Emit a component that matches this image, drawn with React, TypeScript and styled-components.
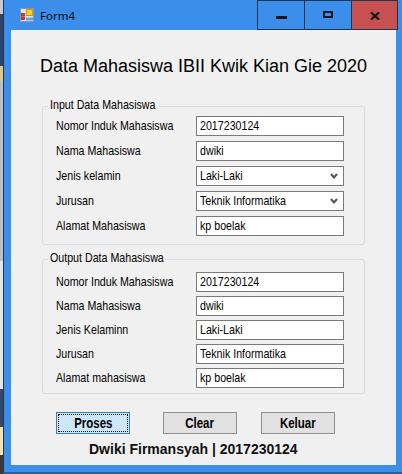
import React from "react";
import styled, { createGlobalStyle } from "styled-components";

const sans = `"Liberation Sans", Arial, sans-serif`;

const Global = createGlobalStyle`
  html, body { margin: 0; padding: 0; background: #1d3557; }
  body { width: 402px; height: 474px; overflow: hidden; }
  * { box-sizing: border-box; }
`;

const Screen = styled.div`
  display: flex;
  width: 402px;
  height: 474px;
`;

const DesktopStrip = styled.div`
  width: 3px;
  flex: none;
  background: linear-gradient(
    #c3ccd6 0 3%,
    #2c4468 3% 14%,
    #d9c98a 14% 17%,
    #b8c2cc 17% 55%,
    #e4e7ea 55% 82%,
    #34496a 82% 90%,
    #efe3b4 90% 96%,
    #3a3a3a 96%
  );
`;

const Window = styled.div`
  flex: 1;
  display: flex;
  flex-direction: column;
  background: #3b8eea;
  border-left: 1px solid #1f3552;
  border-bottom: 2px solid #2a5f9e;
  padding: 0 6px 7px 7px;
`;

const TitleBar = styled.div`
  height: 30px;
  flex: none;
  display: flex;
  align-items: center;
  margin: 0 -6px 0 -7px;
  padding: 0 4px 0 16px;
`;

const Caption = styled.span`
  margin-left: 6px;
  font-family: "Noto Sans", "Open Sans", sans-serif;
  font-size: 11.5px;
  color: #0a0a0a;
  flex: 1;
`;

const CaptionButtons = styled.div`
  display: flex;
  align-self: stretch;
`;

const CaptionButton = styled.div<{ $close?: boolean }>`
  width: 47px;
  height: 30px;
  display: flex;
  align-items: center;
  justify-content: center;
  border: 1px solid #1f3552;
  border-right-width: ${(p) => (p.$close ? 1 : 0)}px;
  background: ${(p) => (p.$close ? "#c75050" : "#3b8eea")};
`;

const MinGlyph = styled.div`
  width: 11px;
  height: 3px;
  margin-top: 5px;
  background: #0b1624;
`;

const MaxGlyph = styled.div`
  width: 10px;
  height: 7px;
  margin-top: -1px;
  border: 2px solid #0b1624;
`;

const Client = styled.div`
  flex: 1;
  display: flex;
  flex-direction: column;
  background: #f0f0f0;
`;

const Heading = styled.h1`
  margin: 26px 0 0;
  text-align: center;
  font-family: ${sans};
  font-weight: normal;
  font-size: 18px;
  line-height: 21px;
  color: #000;
`;

/* Narrow (condensed) text like the WinForms label font */
const Narrow = styled.span<{ $center?: boolean }>`
  display: inline-block;
  white-space: nowrap;
  transform: scaleX(0.82);
  transform-origin: ${(p) => (p.$center ? "center" : "left")} center;
`;

const Group = styled.fieldset<{ $mt: number; $pt: number; $pb: number; $gap: number }>`
  margin: ${(p) => p.$mt}px 31px 0 31px;
  padding: ${(p) => p.$pt}px 19px ${(p) => p.$pb}px 13px;
  border: 1px solid #d8dbde;
  border-radius: 3px;
  display: flex;
  flex-direction: column;
  gap: ${(p) => p.$gap}px;
  min-width: 0;
`;

const Legend = styled.legend<{ $w: number }>`
  width: ${(p) => p.$w}px;
  margin-left: -8px;
  padding: 0 2px 3px;
  overflow: visible;
  font-family: ${sans};
  font-size: 13px;
  line-height: 12px;
  color: #000;
`;

const Row = styled.div`
  display: grid;
  grid-template-columns: 140px 148px;
  align-items: center;
  height: 20px;
`;

const Label = styled.span`
  font-family: ${sans};
  font-size: 13px;
  line-height: 20px;
  color: #000;
  white-space: nowrap;
`;

const Field = styled.div`
  height: 20px;
  display: flex;
  align-items: center;
  justify-content: space-between;
  padding: 0 5px 0 3px;
  border: 1px solid #7a7a7a;
  background: #fff;
  font-family: ${sans};
  font-size: 13px;
  line-height: 18px;
  color: #000;
  white-space: nowrap;
`;

const ButtonRow = styled.div`
  display: flex;
  margin-top: 18px;
  padding-left: 45px;
`;

const Button = styled.div<{ $primary?: boolean; $ml?: number }>`
  position: relative;
  width: 74px;
  height: 22px;
  margin-left: ${(p) => p.$ml ?? 0}px;
  display: flex;
  align-items: center;
  justify-content: center;
  border: 1px solid ${(p) => (p.$primary ? "#3c7fb1" : "#8f8f8f")};
  background: ${(p) => (p.$primary ? "#cce6fa" : "#e1e1e1")};
  font-family: ${sans};
  font-weight: bold;
  font-size: 14px;
  line-height: 16px;
  color: #000;

  ${(p) =>
    p.$primary &&
    `&::after {
      content: "";
      position: absolute;
      inset: 1px;
      border: 1px dotted #000;
    }`}
`;

const Footer = styled.div`
  margin-top: 7px;
  padding-left: 78px;
  font-family: ${sans};
  font-weight: bold;
  font-size: 14px;
  line-height: 16px;
  color: #111;
`;

const AppIcon = () => (
  <svg width="14" height="14" viewBox="0 0 14 14">
    <rect x="0.5" y="0.5" width="13" height="13" fill="#dfe7f0" stroke="#8797ab" />
    <rect x="6.5" y="1.5" width="6" height="6" fill="#f7cf2a" stroke="#c99a12" />
    <rect x="1.5" y="5.5" width="3" height="2.5" fill="#d93a2f" stroke="#a8241c" strokeWidth="0.8" />
    <rect x="1.5" y="9" width="3" height="2.5" fill="#d93a2f" stroke="#a8241c" strokeWidth="0.8" />
    <rect x="6" y="9.5" width="7" height="3" fill="#6f9fdc" />
  </svg>
);

const CloseGlyph = () => (
  <svg width="10" height="8" viewBox="0 0 10 8" style={{ marginTop: 1 }}>
    <path d="M1 0.5 L9 7.5 M9 0.5 L1 7.5" stroke="#111" strokeWidth="2.2" />
  </svg>
);

const Chevron = () => (
  <svg width="8" height="6" viewBox="0 0 8 6">
    <polyline points="1,1 4,4.5 7,1" fill="none" stroke="#555" strokeWidth="2" />
  </svg>
);

type Item = { label: string; value: string; combo?: boolean };

const inputs: Item[] = [
  { label: "Nomor Induk Mahasiswa", value: "2017230124" },
  { label: "Nama Mahasiswa", value: "dwiki" },
  { label: "Jenis kelamin", value: "Laki-Laki", combo: true },
  { label: "Jurusan", value: "Teknik Informatika", combo: true },
  { label: "Alamat Mahasiswa", value: "kp boelak" },
];

const outputs: Item[] = [
  { label: "Nomor Induk Mahasiswa", value: "2017230124" },
  { label: "Nama Mahasiswa", value: "dwiki" },
  { label: "Jenis Kelaminn", value: "Laki-Laki" },
  { label: "Jurusan", value: "Teknik Informatika" },
  { label: "Alamat mahasiswa", value: "kp boelak" },
];

const Rows = ({ items }: { items: Item[] }) => (
  <>
    {items.map((it) => (
      <Row key={it.label}>
        <Label>
          <Narrow>{it.label}</Narrow>
        </Label>
        <Field>
          <Narrow>{it.value}</Narrow>
          {it.combo && <Chevron />}
        </Field>
      </Row>
    ))}
  </>
);

export default function App() {
  return (
    <>
      <Global />
      <Screen>
        <DesktopStrip />
        <Window>
          <TitleBar>
            <AppIcon />
            <Caption>Form4</Caption>
            <CaptionButtons>
              <CaptionButton>
                <MinGlyph />
              </CaptionButton>
              <CaptionButton>
                <MaxGlyph />
              </CaptionButton>
              <CaptionButton $close>
                <CloseGlyph />
              </CaptionButton>
            </CaptionButtons>
          </TitleBar>
          <Client>
            <Heading>Data Mahasiswa IBII Kwik Kian Gie 2020</Heading>
            <Group $mt={22} $pt={2} $pb={8} $gap={5}>
              <Legend $w={110}>
                <Narrow>Input Data Mahasiswa</Narrow>
              </Legend>
              <Rows items={inputs} />
            </Group>
            <Group $mt={7} $pt={5} $pb={5} $gap={4}>
              <Legend $w={117}>
                <Narrow>Output Data Mahasiswa</Narrow>
              </Legend>
              <Rows items={outputs} />
            </Group>
            <ButtonRow>
              <Button $primary>
                <Narrow $center>Proses</Narrow>
              </Button>
              <Button $ml={33}>
                <Narrow $center>Clear</Narrow>
              </Button>
              <Button $ml={24}>
                <Narrow $center>Keluar</Narrow>
              </Button>
            </ButtonRow>
            <Footer>Dwiki Firmansyah | 2017230124</Footer>
          </Client>
        </Window>
      </Screen>
    </>
  );
}
